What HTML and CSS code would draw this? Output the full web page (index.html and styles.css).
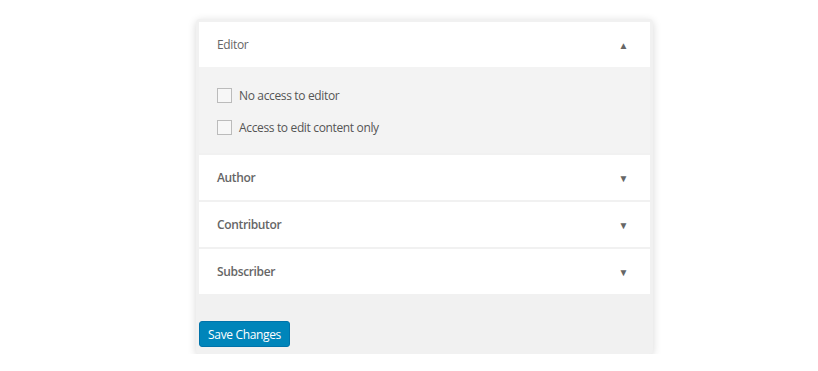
FILE: index.html
```html
<!DOCTYPE html>
<html lang="en">
<head>
  <meta charset="UTF-8" />
  <meta name="viewport" content="width=device-width, initial-scale=1.0" />
  <title>Role access</title>
  <link rel="stylesheet" href="styles.css">
</head>
<body>
  <div class="panel">
    <div class="role open">
      <div class="role-head">
        <span class="role-name">Editor</span>
        <span class="arrow">&#9650;</span>
      </div>
      <div class="role-body">
        <label class="check"><span class="box"></span>No access to editor</label>
        <label class="check"><span class="box"></span>Access to edit content only</label>
      </div>
    </div>
    <div class="role">
      <div class="role-head">
        <span class="role-name">Author</span>
        <span class="arrow">&#9660;</span>
      </div>
    </div>
    <div class="role">
      <div class="role-head">
        <span class="role-name">Contributor</span>
        <span class="arrow">&#9660;</span>
      </div>
    </div>
    <div class="role">
      <div class="role-head">
        <span class="role-name">Subscriber</span>
        <span class="arrow">&#9660;</span>
      </div>
    </div>
    <div class="actions">
      <button class="save-btn">Save Changes</button>
    </div>
  </div>
</body>
</html>
```

FILE: styles.css
```css
body { margin: 0; padding-top: 19px; background: #fff; font-family: "Open Sans", "Noto Sans", Arial, sans-serif; color: #555; letter-spacing: -0.35px; }
.panel { width: 451px; margin-left: 196px; padding: 3px 3px 7px; background: #f1f1f1; border-radius: 4px; box-shadow: 0 2px 9px rgba(0,0,0,0.16); display: flex; flex-direction: column; gap: 2px; }
.role { background: #fff; }
.role-head { height: 45px; display: flex; align-items: center; justify-content: space-between; padding: 0 22px 0 18px; font-size: 12px; font-weight: 600; color: #666; }
.open .role-head .role-name { font-weight: 400; }
.arrow { font-size: 10px; color: #666; }
.role-body { background: #f3f3f3; padding: 21px 18px 18px; display: flex; flex-direction: column; gap: 17px; }
.check { display: flex; align-items: center; gap: 7px; font-size: 12px; color: #555; height: 15px; }
.box { width: 13px; height: 13px; border: 1px solid #bbb; background: #f7f7f7; }
.actions { padding-top: 25px; }
.save-btn { width: 91px; height: 26px; padding: 0; background: #0085ba; border: 1px solid #0073aa; border-radius: 3px; color: #fff; font-family: inherit; letter-spacing: -0.35px; font-size: 12px; cursor: pointer; }
```
